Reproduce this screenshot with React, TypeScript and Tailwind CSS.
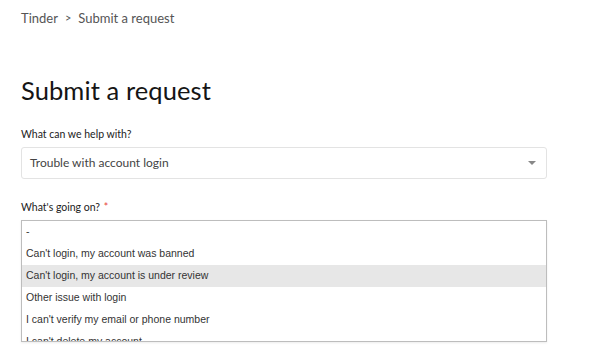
import React, { useState } from 'react';

const options = [
  '-',
  "Can't login, my account was banned",
  "Can't login, my account is under review",
  'Other issue with login',
  "I can't verify my email or phone number",
  "I can't delete my account",
];

export default function App() {
  const [hovered, setHovered] = useState(2);

  return (
    <div className="w-[600px] h-[364px] overflow-hidden bg-white pl-[21px] pt-[10px] font-['Lato',sans-serif]">
      {/* Breadcrumb */}
      <div className="flex items-center gap-[7px] text-[13px] leading-[16px] text-[#555]">
        <span>Tinder</span>
        <span className="text-[11px]">&gt;</span>
        <span>Submit a request</span>
      </div>

      <h1 className="mt-[49px] text-[25.5px] leading-[30px] text-[#151515] font-normal tracking-[0.1px]">
        Submit a request
      </h1>

      <form className="w-[526px] mt-[22px]">
        <label className="block text-[10.5px] leading-[14px] text-[#222] mb-[6px]">What can we help with?</label>
        <div className="relative h-[32px] rounded-[3px] border border-[#e3e3e3] flex items-center pl-[8px]">
          <span className="text-[12px] text-[#444]">Trouble with account login</span>
          <svg className="absolute right-[10px] top-[13px]" width="8" height="4" viewBox="0 0 8 4">
            <path d="M0 0 H8 L4 4 Z" fill="#888" />
          </svg>
        </div>

        <label className="block mt-[21px] text-[10.5px] leading-[14px] text-[#222] mb-[6px]">
          What's going on? <span className="text-[#e8453c] ml-[1px]">*</span>
        </label>
        <div className="h-[122px] overflow-hidden border border-[#bdbdbd] font-['Liberation_Sans',sans-serif] text-[10.5px] text-[#333] shadow-[0_1px_2px_rgba(0,0,0,0.08)]">
          {options.map((o, i) => (
            <div
              key={o}
              onMouseEnter={() => setHovered(i)}
              className={`h-[22px] flex items-center px-[4px] ${i === hovered ? 'bg-[#e7e7e7]' : ''}`}
            >
              {o}
            </div>
          ))}
        </div>
      </form>
    </div>
  );
}
